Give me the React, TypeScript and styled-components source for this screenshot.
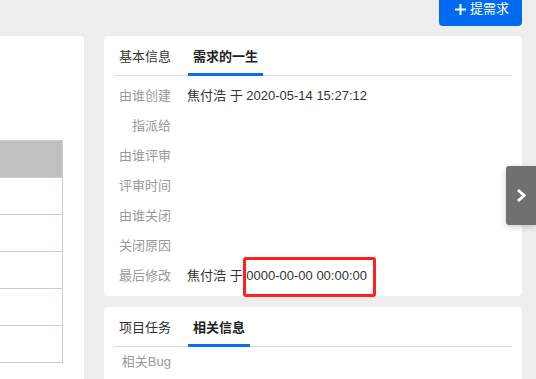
import React from 'react'
import styled, { createGlobalStyle } from 'styled-components'

const GlobalStyle = createGlobalStyle`
  html, body {
    margin: 0;
    padding: 0;
    background: #eeeeee;
    overflow: hidden;
  }
  body {
    font-family: 'Liberation Sans', 'Noto Sans CJK SC', sans-serif;
    font-size: 13px;
    color: #333;
  }
`

interface LifeRow {
  label: string
  user?: string
  time?: string
  highlight?: boolean
}

const lifeRows: LifeRow[] = [
  { label: '由谁创建', user: '焦付浩', time: '2020-05-14 15:27:12' },
  { label: '指派给' },
  { label: '由谁评审' },
  { label: '评审时间' },
  { label: '由谁关闭' },
  { label: '关闭原因' },
  { label: '最后修改', user: '焦付浩', time: '0000-00-00 00:00:00', highlight: true },
]

const PlusIcon = () => (
  <svg width='11' height='11' viewBox='0 0 11 11'>
    <path d='M5.5 0v11M0 5.5h11' stroke='#fff' strokeWidth='2' fill='none' />
  </svg>
)

const ChevronIcon = () => (
  <svg width='10' height='15' viewBox='0 0 10 15'>
    <polyline points='2,2 8,7.5 2,13' stroke='#fff' strokeWidth='3' fill='none' />
  </svg>
)

const App = () => {
  return (
    <>
      <GlobalStyle />
      <Page>
        <Header>
          <AddButton>
            <PlusIcon />
            <span>提需求</span>
          </AddButton>
        </Header>
        <Body>
          <ListCard>
            <Table>
              <HeadRow />
              {[0, 1, 2, 3, 4].map((i) => (
                <Row key={i} />
              ))}
            </Table>
          </ListCard>
          <SideColumn>
            <Card>
              <TabList>
                <Tab>基本信息</Tab>
                <Tab $active>需求的一生</Tab>
              </TabList>
              <Fields $top={5}>
                {lifeRows.map((r) => (
                  <Field key={r.label}>
                    <Label>{r.label}</Label>
                    <Value>
                      {r.user && (
                        <>
                          {r.user} 于{' '}
                          {r.highlight ? <Marked>{r.time}</Marked> : r.time}
                        </>
                      )}
                    </Value>
                  </Field>
                ))}
              </Fields>
            </Card>
            <Card $grow>
              <TabList>
                <Tab>项目任务</Tab>
                <Tab $active>相关信息</Tab>
              </TabList>
              <Fields $top={0}>
                <Field>
                  <Label>相关Bug</Label>
                  <Value />
                </Field>
              </Fields>
            </Card>
          </SideColumn>
        </Body>
      </Page>
      <SideToggle>
        <ChevronIcon />
      </SideToggle>
    </>
  )
}

export default App

const Page = styled.div`
  margin-top: -8px;
  padding-right: 14px;
  height: 400px;
  display: flex;
  flex-direction: column;
`

const Header = styled.div`
  display: flex;
  justify-content: flex-end;
  height: 34px;
`

const AddButton = styled.button`
  display: flex;
  align-items: center;
  gap: 4px;
  width: 83px;
  height: 34px;
  padding: 0 0 0 16px;
  border: none;
  border-radius: 4px;
  background: #006af0;
  color: #fff;
  font-family: inherit;
  font-size: 13px;
  line-height: 16px;
  cursor: pointer;
`

const Body = styled.div`
  flex: 1;
  display: grid;
  grid-template-columns: 84px 418px;
  column-gap: 20px;
  margin-top: 10px;
`

const ListCard = styled.div`
  background: #fff;
  border-radius: 0 4px 0 0;
  padding: 104px 21px 0 0;
`

const Table = styled.div`
  border-right: 1px solid #c8cbd8;
`

const HeadRow = styled.div`
  box-sizing: border-box;
  height: 38px;
  background: #c0c0c0;
  border-top: 1px solid #c8cbd8;
  border-bottom: 1px solid #c8cbd8;
`

const Row = styled.div`
  box-sizing: border-box;
  height: 37px;
  border-bottom: 1px solid #c8cbd8;
`

const SideColumn = styled.div`
  display: flex;
  flex-direction: column;
  gap: 11px;
`

const Card = styled.div<{ $grow?: boolean }>`
  background: #fff;
  border-radius: 4px;
  padding: 0 10px 5px;
  flex: ${(p) => (p.$grow ? 1 : 'none')};
`

const TabList = styled.div`
  display: flex;
  gap: 12px;
  padding-top: 11px;
  border-bottom: 1px solid #dddddd;
`

const Tab = styled.div<{ $active?: boolean }>`
  padding: 0 5px 6px;
  margin-bottom: -1px;
  line-height: 20px;
  font-size: 13px;
  color: ${(p) => (p.$active ? '#222' : '#333')};
  font-weight: ${(p) => (p.$active ? 700 : 400)};
  border-bottom: 3px solid ${(p) => (p.$active ? '#0a6cf0' : 'transparent')};
`

const Fields = styled.div<{ $top: number }>`
  padding-top: ${(p) => p.$top}px;
`

const Field = styled.div`
  display: grid;
  grid-template-columns: 57px 1fr;
  column-gap: 16px;
  height: 30px;
  line-height: 30px;
`

const Label = styled.div`
  text-align: right;
  color: #999;
  white-space: nowrap;
`

const Value = styled.div`
  color: #333;
  white-space: nowrap;
`

const Marked = styled.span`
  position: relative;
  display: inline-block;
  height: 30px;

  &::after {
    content: '';
    position: absolute;
    top: -4px;
    bottom: -6px;
    left: -3px;
    right: -9px;
    border: 3px solid #ff1f1f;
    border-radius: 3px;
  }
`

const SideToggle = styled.div`
  position: fixed;
  right: 0;
  top: 166px;
  width: 30px;
  height: 59px;
  display: flex;
  align-items: center;
  justify-content: center;
  background: #707070;
  border-radius: 3px 0 0 3px;
  box-shadow: 0 2px 6px rgba(0, 0, 0, 0.2);
`
